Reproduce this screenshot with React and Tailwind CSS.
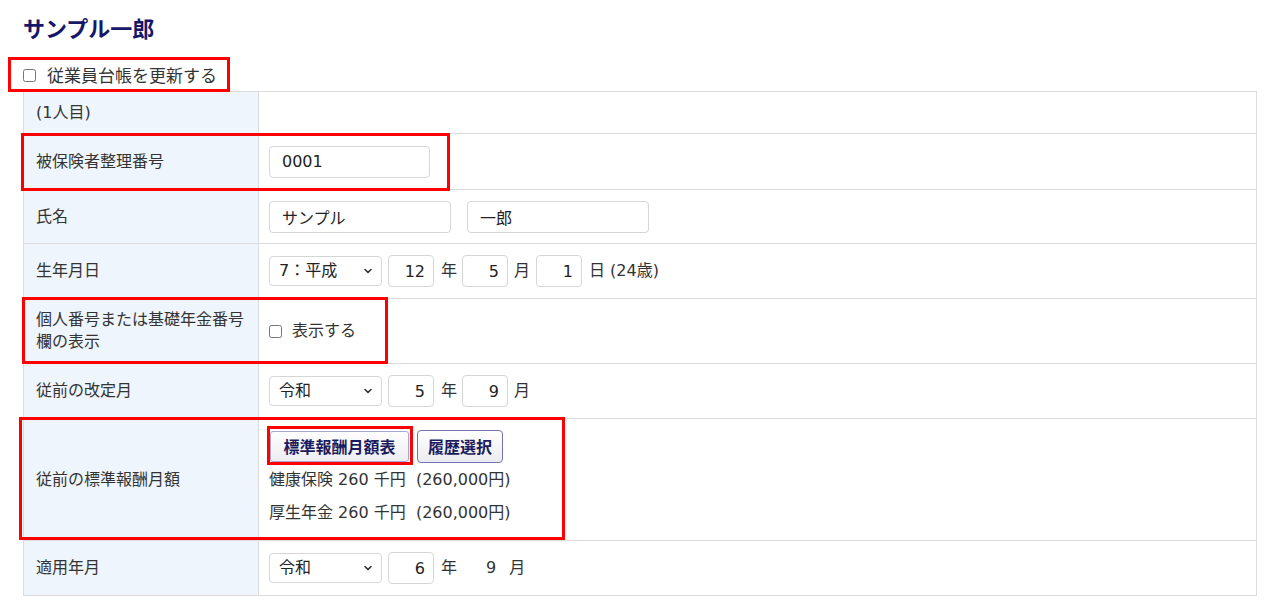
import React from 'react';

const Chevron = () => (
  <svg
    className="pointer-events-none absolute right-[9px] top-1/2 -translate-y-1/2"
    width="10"
    height="10"
    viewBox="0 0 10 10"
  >
    <path d="M2 3.5l3 3 3-3" fill="none" stroke="#333" strokeWidth="1.6" strokeLinecap="round" strokeLinejoin="round" />
  </svg>
);

const EraSelect = ({ value }) => (
  <div className="relative inline-block">
    <select
      defaultValue={value}
      className="appearance-none w-[113px] h-[30px] pl-[9px] pr-[24px] border border-[#d6d6d6] rounded-[4px] bg-white text-[#222] leading-[28px] outline-none"
    >
      <option>{value}</option>
    </select>
    <Chevron />
  </div>
);

const NumInput = ({ value }) => (
  <input
    readOnly
    defaultValue={value}
    className="w-[46px] h-[32px] pr-[8px] text-right border border-[#d6d6d6] rounded-[4px] bg-white text-[#222] outline-none"
  />
);

const TextInput = ({ value, w = 'w-[182px]' }) => (
  <input
    readOnly
    defaultValue={value}
    className={`${w} h-[32px] px-[12px] border border-[#d6d6d6] rounded-[4px] bg-white text-[#222] outline-none`}
  />
);

const Row = ({ label, h, children }) => (
  <tr className={`${h} border-b border-[#dcdcdc]`}>
    <th className="w-[235px] bg-[#eef5fc] border-r border-[#dcdcdc] px-3 text-left font-normal align-middle leading-[22px]">
      {label}
    </th>
    <td className="pl-[10px] pr-3 align-middle">{children}</td>
  </tr>
);

export default function App() {
  return (
    <div className="font-[family-name:'DejaVu_Sans','Noto_Sans_CJK_JP',sans-serif] text-[16px] text-[#333] bg-white min-h-[604px] pl-[23px] pt-[13px]">
      <h1 className="font-[family-name:'Noto_Sans_CJK_JP',sans-serif] text-[22px] font-bold leading-[28px] text-[#17176a]">
        サンプル一郎
      </h1>

      <label className="relative z-10 mt-[16px] -ml-[15px] w-[222px] h-[35px] border-[3px] border-[#ff0000] flex items-center pl-[12px] pt-[2px] bg-white">
        <input type="checkbox" className="w-[13px] h-[13px] m-0" />
        <span className="ml-[11px] text-[17px] leading-[22px]">従業員台帳を更新する</span>
      </label>

      <div className="relative -mt-[1px] w-[1234px]">
        <table className="w-[1234px] border-collapse border border-[#dcdcdc]">
          <tbody>
            <Row label="(1人目)" h="h-[42px]" />
            <Row label="被保険者整理番号" h="h-[56px]">
              <TextInput value="0001" w="w-[161px]" />
            </Row>
            <Row label="氏名" h="h-[54px]">
              <div className="flex items-center gap-[16px]">
                <TextInput value="サンプル" />
                <TextInput value="一郎" />
              </div>
            </Row>
            <Row label="生年月日" h="h-[55px]">
              <div className="flex items-center">
                <EraSelect value="7：平成" />
                <span className="ml-[6px]"><NumInput value="12" /></span>
                <span className="ml-[7px]">年</span>
                <span className="ml-[5px]"><NumInput value="5" /></span>
                <span className="ml-[6px]">月</span>
                <span className="ml-[6px]"><NumInput value="1" /></span>
                <span className="ml-[7px]">日 (24歳)</span>
              </div>
            </Row>
            <Row
              label={
                <>
                  個人番号または基礎年金番号
                  <br />
                  欄の表示
                </>
              }
              h="h-[65px]"
            >
              <label className="flex items-center">
                <input type="checkbox" className="w-[13px] h-[13px] m-0" />
                <span className="ml-[10px]">表示する</span>
              </label>
            </Row>
            <Row label="従前の改定月" h="h-[55px]">
              <div className="flex items-center">
                <EraSelect value="令和" />
                <span className="ml-[6px]"><NumInput value="5" /></span>
                <span className="ml-[7px]">年</span>
                <span className="ml-[5px]"><NumInput value="9" /></span>
                <span className="ml-[6px]">月</span>
              </div>
            </Row>
            <Row label="従前の標準報酬月額" h="h-[122px]">
              <div className="flex items-center gap-[8px] ml-[1px]">
                <button className="h-[31px] w-[139px] border border-[#a9a9d0] rounded-[3px] bg-gradient-to-b from-white to-[#ededf2] font-[family-name:'Noto_Sans_CJK_JP',sans-serif] font-bold text-[#1b1b60] text-[16px] leading-[29px]">
                  標準報酬月額表
                </button>
                <button className="h-[33px] w-[86px] border border-[#7474ad] rounded-[4px] bg-gradient-to-b from-white to-[#ececf0] font-[family-name:'Noto_Sans_CJK_JP',sans-serif] font-bold text-[#1b1b60] text-[16px] leading-[31px]">
                  履歴選択
                </button>
              </div>
              <div className="leading-[33px]">健康保険 260 千円&nbsp; (260,000円)</div>
              <div className="leading-[33px]">厚生年金 260 千円&nbsp; (260,000円)</div>
            </Row>
            <Row label="適用年月" h="h-[55px]">
              <div className="flex items-center">
                <EraSelect value="令和" />
                <span className="ml-[6px]"><NumInput value="6" /></span>
                <span className="ml-[7px]">年</span>
                <span className="ml-[29px]">9</span>
                <span className="ml-[13px]">月</span>
              </div>
            </Row>
          </tbody>
        </table>

        {/* annotation boxes */}
        <div className="pointer-events-none absolute left-[-2px] top-[42px] w-[429px] h-[58px] border-[3px] border-[#ff0000]" />
        <div className="pointer-events-none absolute left-[-1px] top-[206px] w-[366px] h-[67px] border-[3px] border-[#ff0000]" />
        <div className="pointer-events-none absolute left-[-4px] top-[326px] w-[546px] h-[123px] border-[3px] border-[#ff0000]" />
        <div className="pointer-events-none absolute left-[244px] top-[335px] w-[146px] h-[39px] border-[3px] border-[#ff0000]" />
      </div>
    </div>
  );
}
